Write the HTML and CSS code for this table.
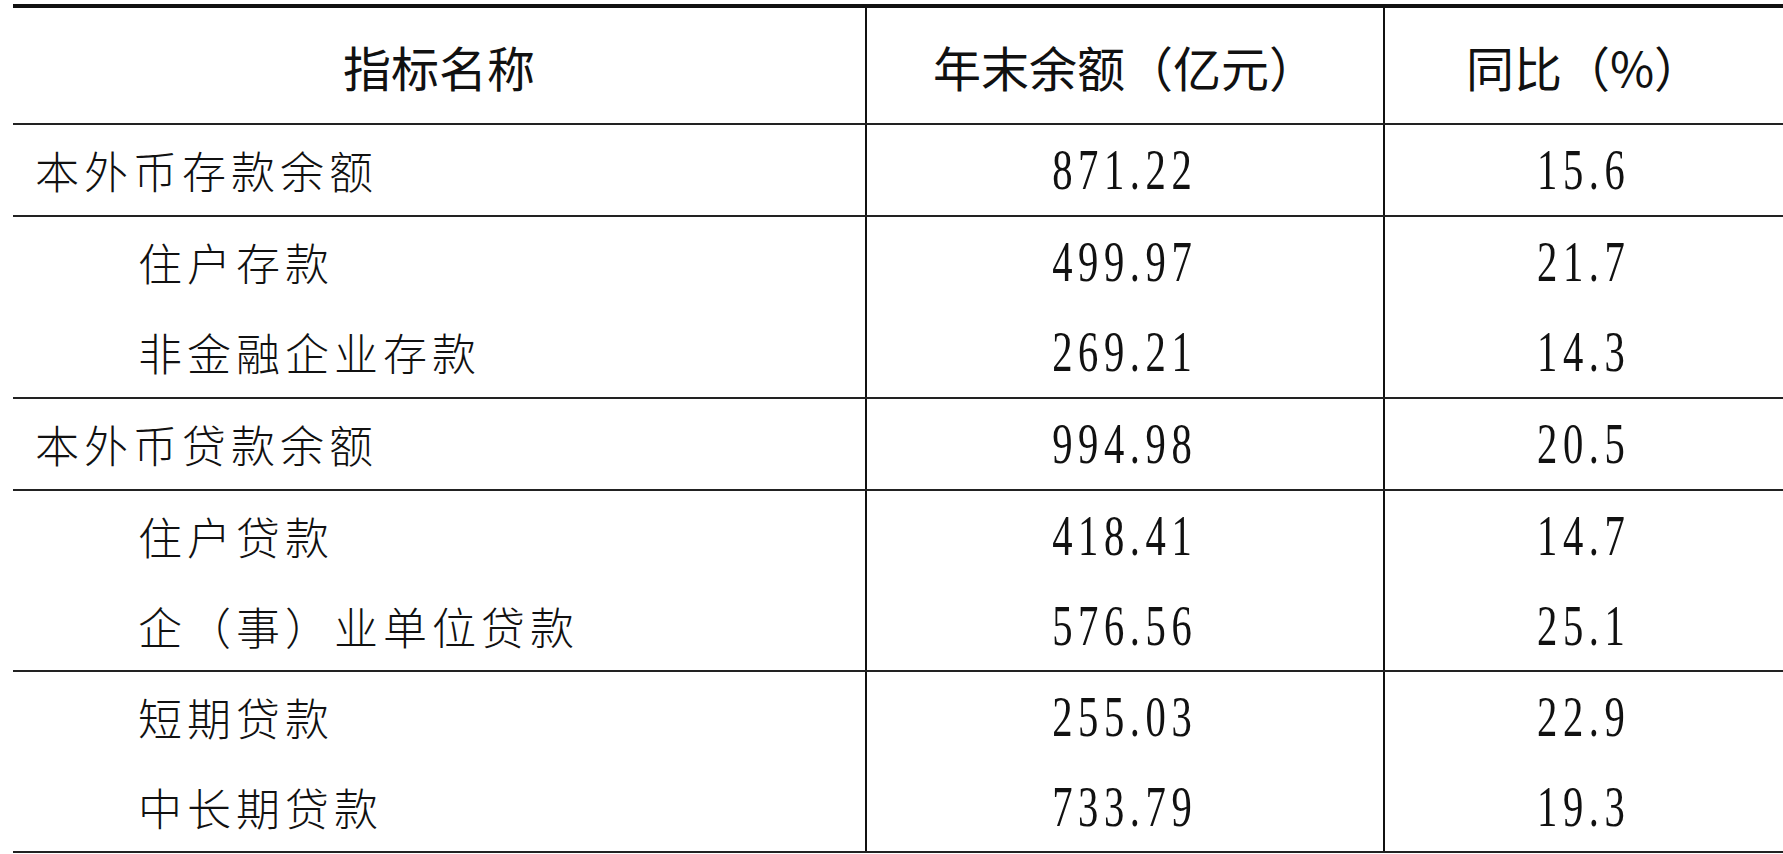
FILE: index.html
```html
<!DOCTYPE html>
<html lang="zh-CN">
<head>
<meta charset="utf-8">
<title>存贷款</title>
<link rel="stylesheet" href="styles.css">
</head>
<body>
<div class="table">
  <div class="row head">
    <div class="cell name">指标名称</div>
    <div class="cell">年末余额（亿元）</div>
    <div class="cell">同比（%）</div>
  </div>
  <div class="group">
    <div class="row">
      <div class="cell name">本外币存款余额</div>
      <div class="cell num"><span>871.22</span></div>
      <div class="cell num"><span>15.6</span></div>
    </div>
  </div>
  <div class="group">
    <div class="row">
      <div class="cell name sub">住户存款</div>
      <div class="cell num"><span>499.97</span></div>
      <div class="cell num"><span>21.7</span></div>
    </div>
    <div class="row">
      <div class="cell name sub">非金融企业存款</div>
      <div class="cell num"><span>269.21</span></div>
      <div class="cell num"><span>14.3</span></div>
    </div>
  </div>
  <div class="group">
    <div class="row">
      <div class="cell name">本外币贷款余额</div>
      <div class="cell num"><span>994.98</span></div>
      <div class="cell num"><span>20.5</span></div>
    </div>
  </div>
  <div class="group">
    <div class="row">
      <div class="cell name sub">住户贷款</div>
      <div class="cell num"><span>418.41</span></div>
      <div class="cell num"><span>14.7</span></div>
    </div>
    <div class="row">
      <div class="cell name sub">企（事）业单位贷款</div>
      <div class="cell num"><span>576.56</span></div>
      <div class="cell num"><span>25.1</span></div>
    </div>
  </div>
  <div class="group">
    <div class="row">
      <div class="cell name sub">短期贷款</div>
      <div class="cell num"><span>255.03</span></div>
      <div class="cell num"><span>22.9</span></div>
    </div>
    <div class="row">
      <div class="cell name sub">中长期贷款</div>
      <div class="cell num"><span>733.79</span></div>
      <div class="cell num"><span>19.3</span></div>
    </div>
  </div>
</div>
</body>
</html>
```
FILE: styles.css
```css
html, body {
  margin: 0;
  padding: 0;
  background: #fff;
}
body {
  font-family: "Noto Sans CJK SC", "Liberation Sans", sans-serif;
  color: #111;
}
.table {
  margin: 4px 0 0 13px;
  width: 1770px;
  border-top: 4px solid #111;
  border-bottom: 2px solid #222;
}
.row {
  display: grid;
  grid-template-columns: 852px 518px 1fr;
  height: 90px;
}
.group {
  border-top: 2px solid #222;
}
.group .row:last-child {
  height: 89px;
}
.group:nth-child(2) .row:last-child,
.group:nth-child(3) .row:last-child,
.group:nth-child(4) .row:last-child {
  height: 90px;
}
.cell {
  display: flex;
  align-items: center;
  justify-content: center;
  font-size: 44px;
  font-weight: 300;
  letter-spacing: 5px;
  line-height: 1;
}
.cell + .cell {
  border-left: 2px solid #111;
}
.head {
  height: 115px;
}
.head .cell {
  font-size: 48px;
  font-weight: 400;
  letter-spacing: 0;
}
.name {
  justify-content: flex-start;
  padding-left: 22px;
}
.head .name {
  justify-content: center;
  padding-left: 0;
}
.sub {
  padding-left: 125px;
}
.num span {
  display: inline-block;
  font-family: "Liberation Serif", serif;
  font-size: 58px;
  font-weight: 400;
  letter-spacing: 8px;
  transform: scaleX(0.7);
}
```
